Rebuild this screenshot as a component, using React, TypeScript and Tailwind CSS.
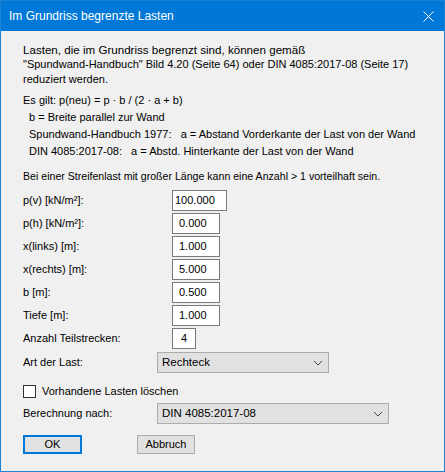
import React from 'react';

const labelFont = { fontFamily: '"Liberation Sans", Arial, sans-serif' };

const Field: React.FC<{ label: string; value: string; width: string; pad?: string }> = ({ label, value, width, pad = 'pl-[6px]' }) => (
  <div className="flex items-center h-[23px]">
    <div className="w-[149px]">{label}</div>
    <div className={`h-[21px] ${width} ${pad} bg-white border border-[#7a7a7a] flex items-center`}>{value}</div>
  </div>
);

const Chevron = () => (
  <svg width="10" height="6" viewBox="0 0 10 6" className="text-[#444]">
    <path d="M1 1l4 4 4-4" fill="none" stroke="currentColor" strokeWidth="1" />
  </svg>
);

const Combo: React.FC<{ value: string; width: string }> = ({ value, width }) => (
  <div className={`h-[21px] ${width} bg-[#e1e1e1] border border-[#adadad] flex items-center justify-between pl-[4px] pr-[5px] text-[11.5px]`}>
    <span>{value}</span>
    <Chevron />
  </div>
);

export default function App() {
  return (
    <div className="w-[445px] h-[472px] bg-[#f0f0f0] border border-[#1883d7] flex flex-col text-[11px] text-black" style={labelFont}>
      <div className="h-[30px] bg-[#0078d7] flex items-center justify-between pl-[8px] pr-[10px] shrink-0">
        <span className="text-white text-[12px]">Im Grundriss begrenzte Lasten</span>
        <svg width="11" height="11" viewBox="0 0 11 11">
          <path d="M0.5 0.5l10 10M10.5 0.5l-10 10" stroke="white" strokeWidth="1" />
        </svg>
      </div>

      <div className="pl-[22px] pt-[11px] flex flex-col">
        <div className="leading-[15px]">
          <div className="text-[11.6px]">Lasten, die im Grundriss begrenzt sind, können gemäß</div>
          <div>"Spundwand-Handbuch" Bild 4.20 (Seite 64) oder DIN 4085:2017-08 (Seite 17)</div>
          <div>reduziert werden.</div>
        </div>
        <div className="mt-[5px] leading-[17px]">
          <div>Es gilt: p(neu) = p · b / (2 · a + b)</div>
          <div className="pl-[6px]">b = Breite parallel zur Wand</div>
          <div className="pl-[6px] whitespace-pre">Spundwand-Handbuch 1977:   a = Abstand Vorderkante der Last von der Wand</div>
          <div className="pl-[6px] whitespace-pre">DIN 4085:2017-08:   a = Abstd. Hinterkante der Last von der Wand</div>
        </div>
        <div className="mt-[9px] leading-[15px] text-[10.6px]">Bei einer Streifenlast mit großer Länge kann eine Anzahl &gt; 1 vorteilhaft sein.</div>

        <div className="mt-[5px] flex flex-col">
          <Field label="p(v) [kN/m²]:" value="100.000" width="w-[55px]" pad="pl-[2px]" />
          <Field label="p(h) [kN/m²]:" value="0.000" width="w-[48px]" />
          <Field label="x(links) [m]:" value="1.000" width="w-[48px]" />
          <Field label="x(rechts) [m]:" value="5.000" width="w-[48px]" />
          <Field label="b [m]:" value="0.500" width="w-[48px]" />
          <Field label="Tiefe [m]:" value="1.000" width="w-[48px]" />
          <Field label="Anzahl Teilstrecken:" value="4" width="w-[24px]" pad="pl-[8px]" />
        </div>

        <div className="mt-[2px] flex items-center h-[21px]">
          <div className="w-[134px]">Art der Last:</div>
          <Combo value="Rechteck" width="w-[172px]" />
        </div>

        <div className="mt-[12px] flex items-center h-[13px]">
          <div className="w-[13px] h-[13px] bg-white border border-[#333]" />
          <span className="ml-[6px]">Vorhandene Lasten löschen</span>
        </div>

        <div className="mt-[5px] flex items-center h-[21px]">
          <div className="w-[134px]">Berechnung nach:</div>
          <Combo value="DIN 4085:2017-08" width="w-[232px]" />
        </div>

        <div className="mt-[11px] flex items-center">
          <div className="w-[59px] h-[19px] bg-[#e1e1e1] border-2 border-[#0078d7] flex items-center justify-center">OK</div>
          <div className="ml-[55px] w-[58px] h-[19px] bg-[#e1e1e1] border border-[#adadad] flex items-center justify-center">Abbruch</div>
        </div>
      </div>
    </div>
  );
}
